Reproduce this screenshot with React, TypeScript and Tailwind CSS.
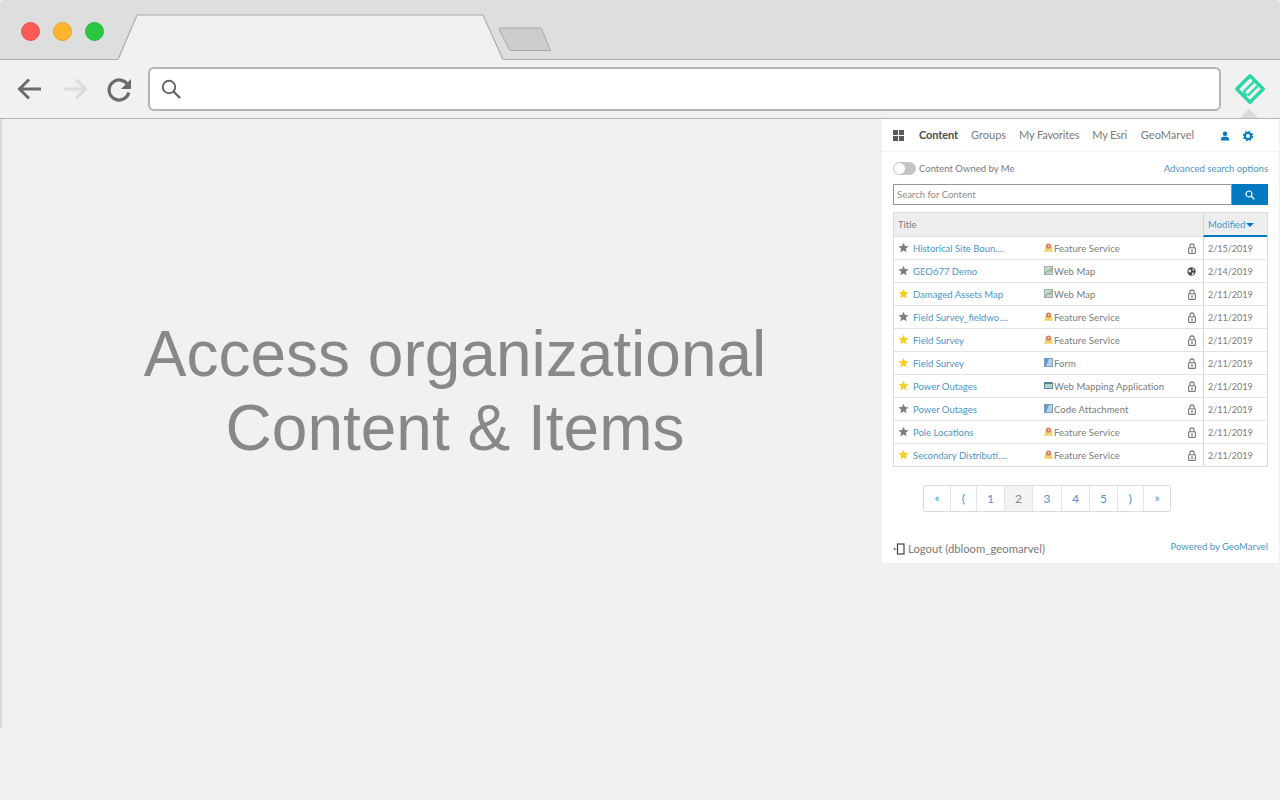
import React from "react";

const F = "font-['Lato','Open_Sans',sans-serif]";

function Star({ on }: { on: boolean }) {
  return (
    <svg width="11" height="11" viewBox="0 0 24 24" className="shrink-0 -mt-[1px]">
      <path d="M12 1.5l3.2 7.2 7.8.8-5.9 5.2 1.7 7.7L12 18.4l-6.8 4 1.7-7.7L1 9.5l7.8-.8z" fill={on ? "#f7cf1d" : "#7f7f7f"} />
    </svg>
  );
}

function TypeIcon({ t }: { t: string }) {
  if (t === "Feature Service")
    return (
      <svg width="9" height="9" viewBox="0 0 9 9" className="shrink-0 -mt-[1px]">
        <path d="M1.6 3h5.8L8.8 8.8H.2z" fill="#ecd36b" />
        <circle cx="4.5" cy="3" r="2.6" fill="#d9795b" />
        <circle cx="4.5" cy="3" r=".9" fill="#f4e3b0" />
      </svg>
    );
  if (t === "Web Map")
    return (
      <svg width="9" height="9" viewBox="0 0 9 9" className="shrink-0 -mt-[1px]">
        <rect x=".5" y=".5" width="8" height="8" fill="#c4dac2" stroke="#a3adad" />
        <path d="M1 7.5L4.5 4 6 5.5 8 2" stroke="#6f9f87" fill="none" />
      </svg>
    );
  if (t === "Web Mapping Application")
    return (
      <svg width="9" height="9" viewBox="0 0 9 9" className="shrink-0 -mt-[1px]">
        <rect x=".5" y="1.5" width="8" height="6" fill="#a9d4c6" stroke="#5d8a96" />
        <rect x="1" y="2" width="7" height="1" fill="#4c7f8c" />
      </svg>
    );
  return (
    <svg width="9" height="9" viewBox="0 0 9 9" className="shrink-0 -mt-[1px]">
      <rect x=".5" y=".5" width="8" height="8" fill="#5b9bd5" stroke="#7d9cb8" />
      <path d="M5 1h3v7H2z" fill="#b4d3ec" />
    </svg>
  );
}

function Lock() {
  return (
    <svg width="8" height="11" viewBox="0 0 8 11">
      <path d="M1.9 5V3a2.1 2.1 0 0 1 4.2 0v2" fill="none" stroke="#777" strokeWidth="1.1" />
      <rect x=".6" y="4.8" width="6.8" height="5.6" rx=".6" fill="#fff" stroke="#777" strokeWidth="1.1" />
      <rect x="3.4" y="6.3" width="1.2" height="2.6" fill="#666" />
    </svg>
  );
}

function Globe() {
  return (
    <svg width="9" height="9" viewBox="0 0 10 10" className="-ml-[1px]">
      <circle cx="5" cy="5" r="4.6" fill="#484848" />
      <path d="M1.5 3.5L4 2.5 4.5 5 3 6.5 1.5 5zM6 1.5L8 3 7 4.5 6 3zM5.5 6.5L8 6 7 8.5 5.5 9z" fill="#ececec" />
    </svg>
  );
}

const rows: [boolean, string, string, "lock" | "globe", string][] = [
  [false, "Historical Site Boun....", "Feature Service", "lock", "2/15/2019"],
  [false, "GEO677 Demo", "Web Map", "globe", "2/14/2019"],
  [true, "Damaged Assets Map", "Web Map", "lock", "2/11/2019"],
  [false, "Field Survey_fieldwo....", "Feature Service", "lock", "2/11/2019"],
  [true, "Field Survey", "Feature Service", "lock", "2/11/2019"],
  [true, "Field Survey", "Form", "lock", "2/11/2019"],
  [true, "Power Outages", "Web Mapping Application", "lock", "2/11/2019"],
  [false, "Power Outages", "Code Attachment", "lock", "2/11/2019"],
  [false, "Pole Locations", "Feature Service", "lock", "2/11/2019"],
  [true, "Secondary Distributi....", "Feature Service", "lock", "2/11/2019"],
];

const pages: [string, string][] = [
  ["«", "w-[26px] text-[11px]"],
  ["⟨", "w-[26px] text-[12px]"],
  ["1", "w-[28px] text-[12px]"],
  ["2", "w-[28px] text-[12px]"],
  ["3", "w-[29px] text-[12px]"],
  ["4", "w-[28px] text-[12px]"],
  ["5", "w-[28px] text-[12px]"],
  ["⟩", "w-[26px] text-[12px]"],
  ["»", "w-[27px] text-[11px]"],
];

export default function App() {
  return (
    <div className={`w-[1280px] h-[800px] overflow-hidden bg-[#f1f1f1] flex flex-col ${F}`}>
      {/* tab strip */}
      <div className="relative h-[60px] shrink-0 bg-[#dedede] border-b border-[#ababab] rounded-t-[4px] flex items-start">
        <div className="flex gap-[13px] pl-[21px] pt-[22px]">
          <span className="w-[19px] h-[19px] rounded-full bg-[#fd5a58] border border-[#e9524f]" />
          <span className="w-[19px] h-[19px] rounded-full bg-[#fdb52e] border border-[#e5a52c]" />
          <span className="w-[19px] h-[19px] rounded-full bg-[#2ac840] border border-[#28b83c]" />
        </div>
        <svg width="390" height="60" viewBox="0 0 390 60" className="absolute left-[116px] top-0">
          <path d="M2 60L21 15H367L388 60z" fill="#f1f1f1" />
          <path d="M2 59.5L21 15H367L387 59.5" fill="none" stroke="#ababab" strokeWidth="1.2" />
        </svg>
        <svg width="56" height="28" viewBox="0 0 56 28" className="absolute left-[497px] top-[26px]">
          <path d="M3 2h40a2 2 0 0 1 1.8 1.2l8.7 21.3H14a2 2 0 0 1-1.8-1.2L2.2 3.5A1 1 0 0 1 3 2z" fill="#cdcdcd" stroke="#a9a9a9" strokeWidth="1" />
        </svg>
      </div>

      {/* toolbar */}
      <div className="relative h-[59px] shrink-0 border-b border-[#b5b5b5] flex items-center pl-[15px] pr-[6px]">
        <div className="flex items-center gap-[15px] w-[133px] shrink-0">
          <svg width="30" height="30" viewBox="0 0 30 30">
            <path d="M26 15H5M14 5.5L4.5 15l9.5 9.5" fill="none" stroke="#6b6b6b" strokeWidth="3" />
          </svg>
          <svg width="30" height="30" viewBox="0 0 30 30">
            <path d="M4 15h21M16 5.5l9.5 9.5-9.5 9.5" fill="none" stroke="#dcdcdc" strokeWidth="3" />
          </svg>
          <svg width="30" height="30" viewBox="0 0 30 30">
            <path d="M23.5 12.5a10 10 0 1 0 .3 6" fill="none" stroke="#6b6b6b" strokeWidth="3.2" />
            <path d="M26 5v10h-10z" fill="#6b6b6b" />
          </svg>
        </div>
        <div className="w-[1073px] h-[44px] bg-white border-2 border-[#b4b4b4] rounded-[6px] flex items-center pl-[10px] shrink-0 -mt-[1px]">
          <svg width="22" height="22" viewBox="0 0 22 22">
            <circle cx="9" cy="9" r="6.2" fill="none" stroke="#666" strokeWidth="2" />
            <path d="M13.5 13.5L20 20" stroke="#666" strokeWidth="2.4" />
          </svg>
        </div>
        <div className="relative flex-1 flex items-center justify-center h-full">
          <svg width="32" height="32" viewBox="0 0 32 32" className="-mt-[1px] ml-[4px]">
            <path d="M16 2.8L29.2 16 16 29.2 2.8 16z" fill="none" stroke="#2bd6a6" strokeWidth="3.4" strokeLinejoin="round" />
            <path d="M20 8.5L9.5 19M14 22.5L23.5 13M9.5 19L13 22.5" fill="none" stroke="#2bd6a6" strokeWidth="2.4" />
          </svg>
          <span className="absolute left-[19px] bottom-0 w-0 h-0 border-x-[9px] border-x-transparent border-b-[9px] border-b-[#d9d9d9]" />
        </div>
      </div>

      {/* body */}
      <div className="flex-1 flex items-start">
        <div className="w-[882px] h-[609px] shrink-0 border-l-2 border-[#d8d8d8] flex justify-center">
          <h1 className="font-['Liberation_Sans',sans-serif] text-[64px] leading-[74px] text-[#888888] text-center font-normal mt-[198px] ml-[26px] w-[700px]">
            Access organizational
            <br />
            Content &amp; Items
          </h1>
        </div>

        <div className="w-[397px] h-[444px] shrink-0 bg-white flex flex-col text-[#7a7a7a]">
          {/* nav */}
          <div className="h-[33px] shrink-0 flex items-center pl-[11px] border-b border-[#f4f4f4] text-[11px]">
            <svg width="11" height="11" viewBox="0 0 11 11" className="mr-[15px] shrink-0">
              <path d="M0 0h5v5H0zM6 0h5v5H6zM0 6h5v5H0zM6 6h5v5H6z" fill="#595959" />
            </svg>
            <span className="font-bold text-[#4c4c4c] mr-[13px] tracking-[-0.1px]">Content</span>
            <span className="mr-[13px]">Groups</span>
            <span className="mr-[13px] tracking-[-0.15px]">My Favorites</span>
            <span className="mr-[14px] tracking-[-0.2px]">My Esri</span>
            <span className="mr-[26px]">GeoMarvel</span>
            <svg width="10" height="10" viewBox="0 0 10 10" className="mr-[13px] shrink-0 mt-[1px]">
              <circle cx="5" cy="2.8" r="2.2" fill="#0079c1" />
              <path d="M1 9.5V8a2.5 2.5 0 0 1 2.5-2.2h3A2.5 2.5 0 0 1 9 8v1.5z" fill="#0079c1" />
            </svg>
            <svg width="10" height="10" viewBox="0 0 10 10" className="shrink-0 mt-[1px]">
              <circle cx="5" cy="5" r="3.1" fill="none" stroke="#0079c1" strokeWidth="2" />
              <circle cx="5" cy="5" r="4.6" fill="none" stroke="#0079c1" strokeWidth="1.2" strokeDasharray="1.8 1.8" />
            </svg>
          </div>

          <div className="px-[11px] flex flex-col">
            {/* toggle row */}
            <div className="flex items-center justify-between mt-[8px] h-[17px] text-[9.5px]">
              <div className="flex items-center gap-[3px]">
                <span className="w-[23px] h-[13px] rounded-full bg-[#c4c4c4] flex items-center pl-[1px]">
                  <span className="w-[11px] h-[11px] rounded-full bg-white" />
                </span>
                <span className="pt-[1px]">Content Owned by Me</span>
              </div>
              <span className="text-[#4a96cc] pt-[1px]">Advanced search options</span>
            </div>
            {/* search */}
            <div className="flex h-[21px] mt-[7px]">
              <div className="flex-1 border border-[#959595] bg-white pl-[3px] pt-[1px] flex items-center text-[9.5px] text-[#8a8a8a]">
                Search for Content
              </div>
              <div className="w-[36px] bg-[#0079c1] flex items-center justify-center">
                <svg width="10" height="10" viewBox="0 0 10 10" className="-ml-[1px] mt-[1px]">
                  <circle cx="4" cy="4" r="3" fill="none" stroke="#fff" strokeWidth="1.2" />
                  <path d="M6.3 6.3L9.3 9.3" stroke="#fff" strokeWidth="1.4" />
                </svg>
              </div>
            </div>
            {/* table */}
            <div className="mt-[7px] border border-[#dcdcdc] text-[9.5px]">
              <div className="flex h-[24px] bg-[#eeeeee] border-b border-[#dddddd]">
                <div className="flex-1 flex items-center pl-[4px] pt-[1px] text-[#7a7a7a]">Title</div>
                <div className="w-[64px] shrink-0 border-l border-[#d4d4d4] border-b-2 border-b-[#0079c1] -mb-[1px] flex items-center pl-[4px] pt-[2px] text-[#4a96cc]">
                  Modified
                  <span className="ml-[1px] w-0 h-0 border-x-[4.5px] border-x-transparent border-t-[4.5px] border-t-[#0079c1]" />
                </div>
              </div>
              {rows.map(([on, title, type, vis, date], i) => (
                <div key={i} className="flex h-[23px] items-center border-b border-[#e2e2e2] last:border-b-0 last:h-[22px]">
                  <div className="w-[150px] shrink-0 flex items-center pl-[4px] gap-[4px]">
                    <Star on={on} />
                    <span className="text-[#4a96cc] whitespace-nowrap pt-[2px]">{title}</span>
                  </div>
                  <div className="flex-1 flex items-center gap-[1px] whitespace-nowrap">
                    <TypeIcon t={type} />
                    <span className="pt-[2px] tracking-[0.1px]">{type}</span>
                  </div>
                  <div className="w-[17px] shrink-0 flex items-center justify-start pl-[2px] pt-[1px]">
                    {vis === "lock" ? <Lock /> : <Globe />}
                  </div>
                  <div className="w-[64px] shrink-0 h-full border-l border-[#d4d4d4] flex items-center pl-[4px] pt-[1px] text-[9px]">
                    {date}
                  </div>
                </div>
              ))}
            </div>
            {/* pagination */}
            <div className="mt-[18px] ml-[30px] flex h-[27px] w-fit border border-[#dcdcdc] rounded-[2px] text-[#4a96cc]">
              {pages.map(([p, cls], i) => (
                <span
                  key={i}
                  className={`${cls} flex items-center justify-center ${i > 0 ? "border-l border-[#e4e4e4]" : ""} ${p === "2" ? "bg-[#f3f3f3] text-[#8a8a8a]" : ""}`}
                >
                  {p}
                </span>
              ))}
            </div>
            {/* footer */}
            <div className="flex justify-between items-center mt-[28px] h-[18px]">
              <div className="flex items-center gap-[3px] text-[11.3px]">
                <svg width="12" height="12" viewBox="0 0 12 12" className="shrink-0">
                  <rect x="4.5" y="1" width="6.5" height="10" fill="none" stroke="#444" strokeWidth="1.2" />
                  <path d="M0.5 6h3M1.5 4.8v2.4" stroke="#777" strokeWidth="1" />
                </svg>
                <span>Logout (dbloom_geomarvel)</span>
              </div>
              <span className="text-[9.5px] text-[#4a96cc] -mt-[4px] pl-[1px]">Powered by GeoMarvel</span>
            </div>
          </div>
        </div>
      </div>
    </div>
  );
}
